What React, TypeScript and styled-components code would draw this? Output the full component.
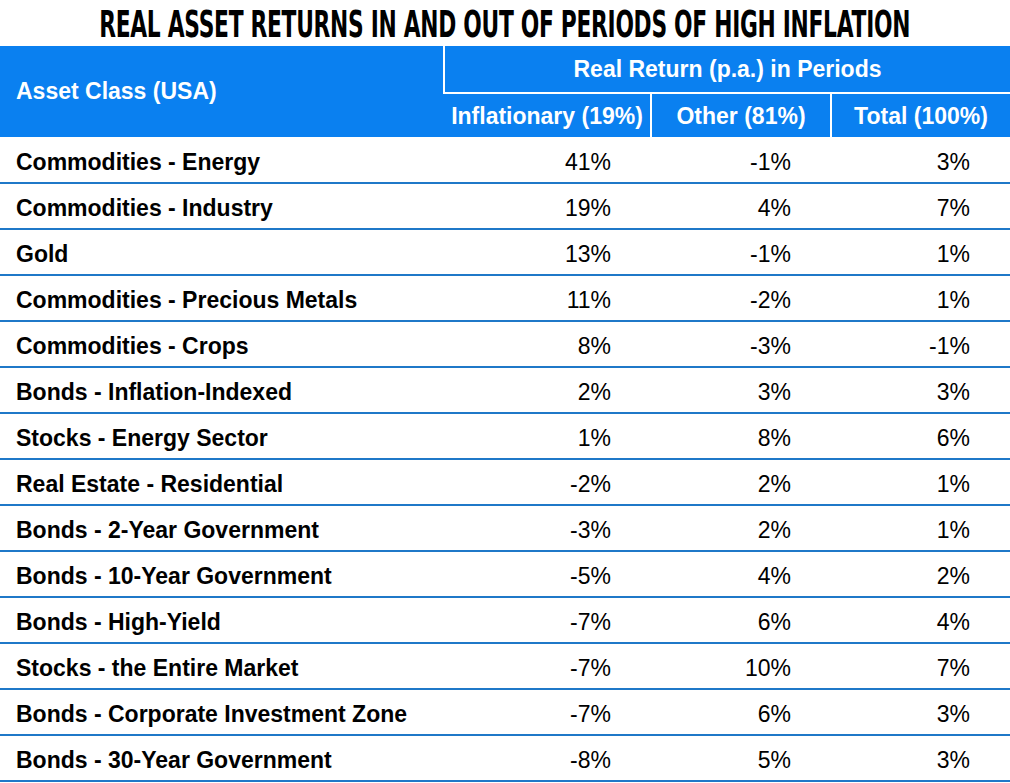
import styled, { createGlobalStyle } from "styled-components";

const GlobalStyle = createGlobalStyle`
  html, body {
    margin: 0;
    padding: 0;
    background: #ffffff;
  }
  body {
    font-family: "Liberation Sans", Arial, sans-serif;
    color: #000;
  }
`;

const Page = styled.div`
  width: 1010px;
  height: 783px;
  overflow: hidden;
  background: #fff;
`;

const Title = styled.h1`
  margin: 0;
  height: 46px;
  display: flex;
  align-items: center;
  justify-content: center;
  overflow: hidden;
`;

const TitleText = styled.span`
  display: inline-block;
  font-family: "DejaVu Sans", sans-serif;
  font-weight: 700;
  font-size: 38px;
  line-height: 46px;
  letter-spacing: -0.5px;
  color: #000;
  white-space: nowrap;
  transform: scaleX(0.573);
  padding-top: 2px;
`;

const Table = styled.table`
  width: 1010px;
  border-collapse: collapse;
  table-layout: fixed;
`;

const HeadCell = styled.th<{ $align?: "left" | "center" }>`
  background: #0a80f0;
  color: #fff;
  font-size: 23px;
  font-weight: 700;
  text-align: ${(p) => p.$align || "center"};
  padding: ${(p) => (p.$align === "left" ? "0 0 0 16px" : "0")};
  border-left: 2px solid #fff;
  &:first-child {
    border-left: none;
  }
`;

const TopRow = styled.tr`
  height: 47px;
`;

const SubRow = styled.tr`
  height: 44px;
  th {
    border-top: 2px solid #fff;
    padding-top: 2px;
  }
`;

const Row = styled.tr`
  height: 46px;
  border-bottom: 2px solid #1f78c8;
`;

const NameCell = styled.td`
  font-size: 23px;
  font-weight: 700;
  padding: 5px 0 0 16px;
  white-space: nowrap;
`;

const ValueCell = styled.td`
  font-size: 23px;
  text-align: right;
  padding: 5px 40px 0 0;
`;

const rows: [string, string, string, string][] = [
  ["Commodities - Energy", "41%", "-1%", "3%"],
  ["Commodities - Industry", "19%", "4%", "7%"],
  ["Gold", "13%", "-1%", "1%"],
  ["Commodities - Precious Metals", "11%", "-2%", "1%"],
  ["Commodities - Crops", "8%", "-3%", "-1%"],
  ["Bonds - Inflation-Indexed", "2%", "3%", "3%"],
  ["Stocks - Energy Sector", "1%", "8%", "6%"],
  ["Real Estate - Residential", "-2%", "2%", "1%"],
  ["Bonds - 2-Year Government", "-3%", "2%", "1%"],
  ["Bonds - 10-Year Government", "-5%", "4%", "2%"],
  ["Bonds - High-Yield", "-7%", "6%", "4%"],
  ["Stocks - the Entire Market", "-7%", "10%", "7%"],
  ["Bonds - Corporate Investment Zone", "-7%", "6%", "3%"],
  ["Bonds - 30-Year Government", "-8%", "5%", "3%"],
];

export default function App() {
  return (
    <Page>
      <GlobalStyle />
      <Title>
        <TitleText>REAL ASSET RETURNS IN AND OUT OF PERIODS OF HIGH INFLATION</TitleText>
      </Title>
      <Table>
        <colgroup>
          <col style={{ width: 444 }} />
          <col style={{ width: 207 }} />
          <col style={{ width: 180 }} />
          <col style={{ width: 179 }} />
        </colgroup>
        <thead>
          <TopRow>
            <HeadCell rowSpan={2} $align="left">
              Asset Class (USA)
            </HeadCell>
            <HeadCell colSpan={3}>Real Return (p.a.) in Periods</HeadCell>
          </TopRow>
          <SubRow>
            <HeadCell>Inflationary (19%)</HeadCell>
            <HeadCell>Other (81%)</HeadCell>
            <HeadCell>Total (100%)</HeadCell>
          </SubRow>
        </thead>
        <tbody>
          {rows.map(([name, infl, other, total]) => (
            <Row key={name}>
              <NameCell>{name}</NameCell>
              <ValueCell>{infl}</ValueCell>
              <ValueCell>{other}</ValueCell>
              <ValueCell>{total}</ValueCell>
            </Row>
          ))}
        </tbody>
      </Table>
    </Page>
  );
}
